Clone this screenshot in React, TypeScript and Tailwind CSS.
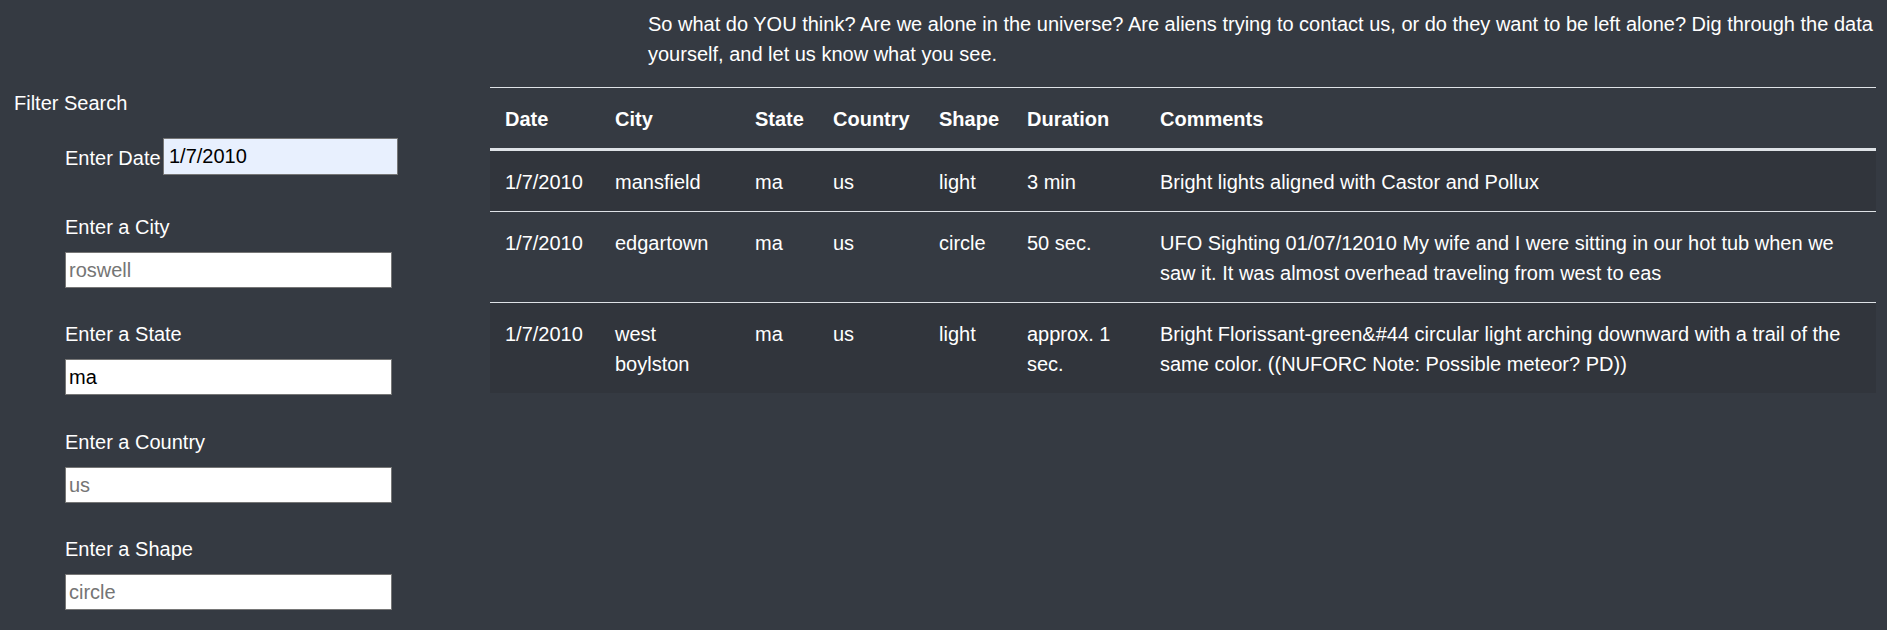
const sightings = [
  {
    date: "1/7/2010",
    city: "mansfield",
    state: "ma",
    country: "us",
    shape: "light",
    duration: "3 min",
    comments: "Bright lights aligned with Castor and Pollux",
  },
  {
    date: "1/7/2010",
    city: "edgartown",
    state: "ma",
    country: "us",
    shape: "circle",
    duration: "50 sec.",
    comments:
      "UFO Sighting 01/07/12010 My wife and I were sitting in our hot tub when we saw it. It was almost overhead traveling from west to eas",
  },
  {
    date: "1/7/2010",
    city: "west boylston",
    state: "ma",
    country: "us",
    shape: "light",
    duration: "approx. 1 sec.",
    comments:
      "Bright Florissant-green&#44 circular light arching downward with a trail of the same color. ((NUFORC Note: Possible meteor? PD))",
  },
];

const filters = [
  { label: "Enter a City", placeholder: "roswell", value: "", gap: "mt-[37px]" },
  { label: "Enter a State", placeholder: "CA", value: "ma", gap: "mt-[31px]" },
  { label: "Enter a Country", placeholder: "us", value: "", gap: "mt-[32px]" },
  { label: "Enter a Shape", placeholder: "circle", value: "", gap: "mt-[31px]" },
];

const cell = "pt-[16px] pb-[14px] px-[15px] border-t border-[#dee2e6] align-top";

export default function App() {
  return (
    <div className="min-h-screen bg-[#353a42] text-white text-[20px] leading-[30px] font-['Liberation_Sans',Arial,sans-serif] flex">
      {/* Filters sidebar */}
      <aside className="w-[490px] shrink-0 pt-[88px]">
        <h5 className="pl-[14px] font-normal">Filter Search</h5>
        <ul className="pl-[65px]">
          <li className="mt-[20px] flex items-center h-[37px]">
            <label className="w-[98px] shrink-0 pt-[2px]">Enter Date</label>
            <input
              type="text"
              defaultValue="1/7/2010"
              className="w-[235px] h-[37px] bg-[#e8f0fe] text-black border border-[#767676] px-[5px] outline-none"
            />
          </li>
          {filters.map((f) => (
            <li key={f.label} className={f.gap}>
              <label className="block">{f.label}</label>
              <input
                type="text"
                placeholder={f.placeholder}
                defaultValue={f.value}
                className="mt-[10px] block w-[327px] h-[36px] bg-white text-black placeholder:text-[#757575] border border-[#767676] px-[3px] outline-none"
              />
            </li>
          ))}
        </ul>
      </aside>

      {/* Intro + results */}
      <main className="flex-1 mr-[11px] pt-[9px]">
        <p className="pl-[158px] whitespace-nowrap">
          So what do YOU think? Are we alone in the universe? Are aliens trying to contact us, or do they want to be left alone? Dig through the data
          <br />
          yourself, and let us know what you see.
        </p>
        <table className="mt-[18px] w-[1386px] table-fixed border-collapse">
          <colgroup>
            <col className="w-[110px]" />
            <col className="w-[140px]" />
            <col className="w-[78px]" />
            <col className="w-[106px]" />
            <col className="w-[88px]" />
            <col className="w-[133px]" />
            <col className="w-[731px]" />
          </colgroup>
          <thead>
            <tr>
              {["Date", "City", "State", "Country", "Shape", "Duration", "Comments"].map((h) => (
                <th
                  key={h}
                  className="text-left font-bold pt-[16px] pb-[14px] px-[15px] border-t border-b-[3px] border-[#dee2e6] align-bottom"
                >
                  {h}
                </th>
              ))}
            </tr>
          </thead>
          <tbody>
            {sightings.map((s, i) => (
              <tr key={i} className={i % 2 === 0 ? "bg-[#31353c]" : ""}>
                <td className={cell}>{s.date}</td>
                <td className={cell}>{s.city}</td>
                <td className={cell}>{s.state}</td>
                <td className={cell}>{s.country}</td>
                <td className={cell}>{s.shape}</td>
                <td className={cell}>{s.duration}</td>
                <td className={cell}>{s.comments}</td>
              </tr>
            ))}
          </tbody>
        </table>
      </main>
    </div>
  );
}
